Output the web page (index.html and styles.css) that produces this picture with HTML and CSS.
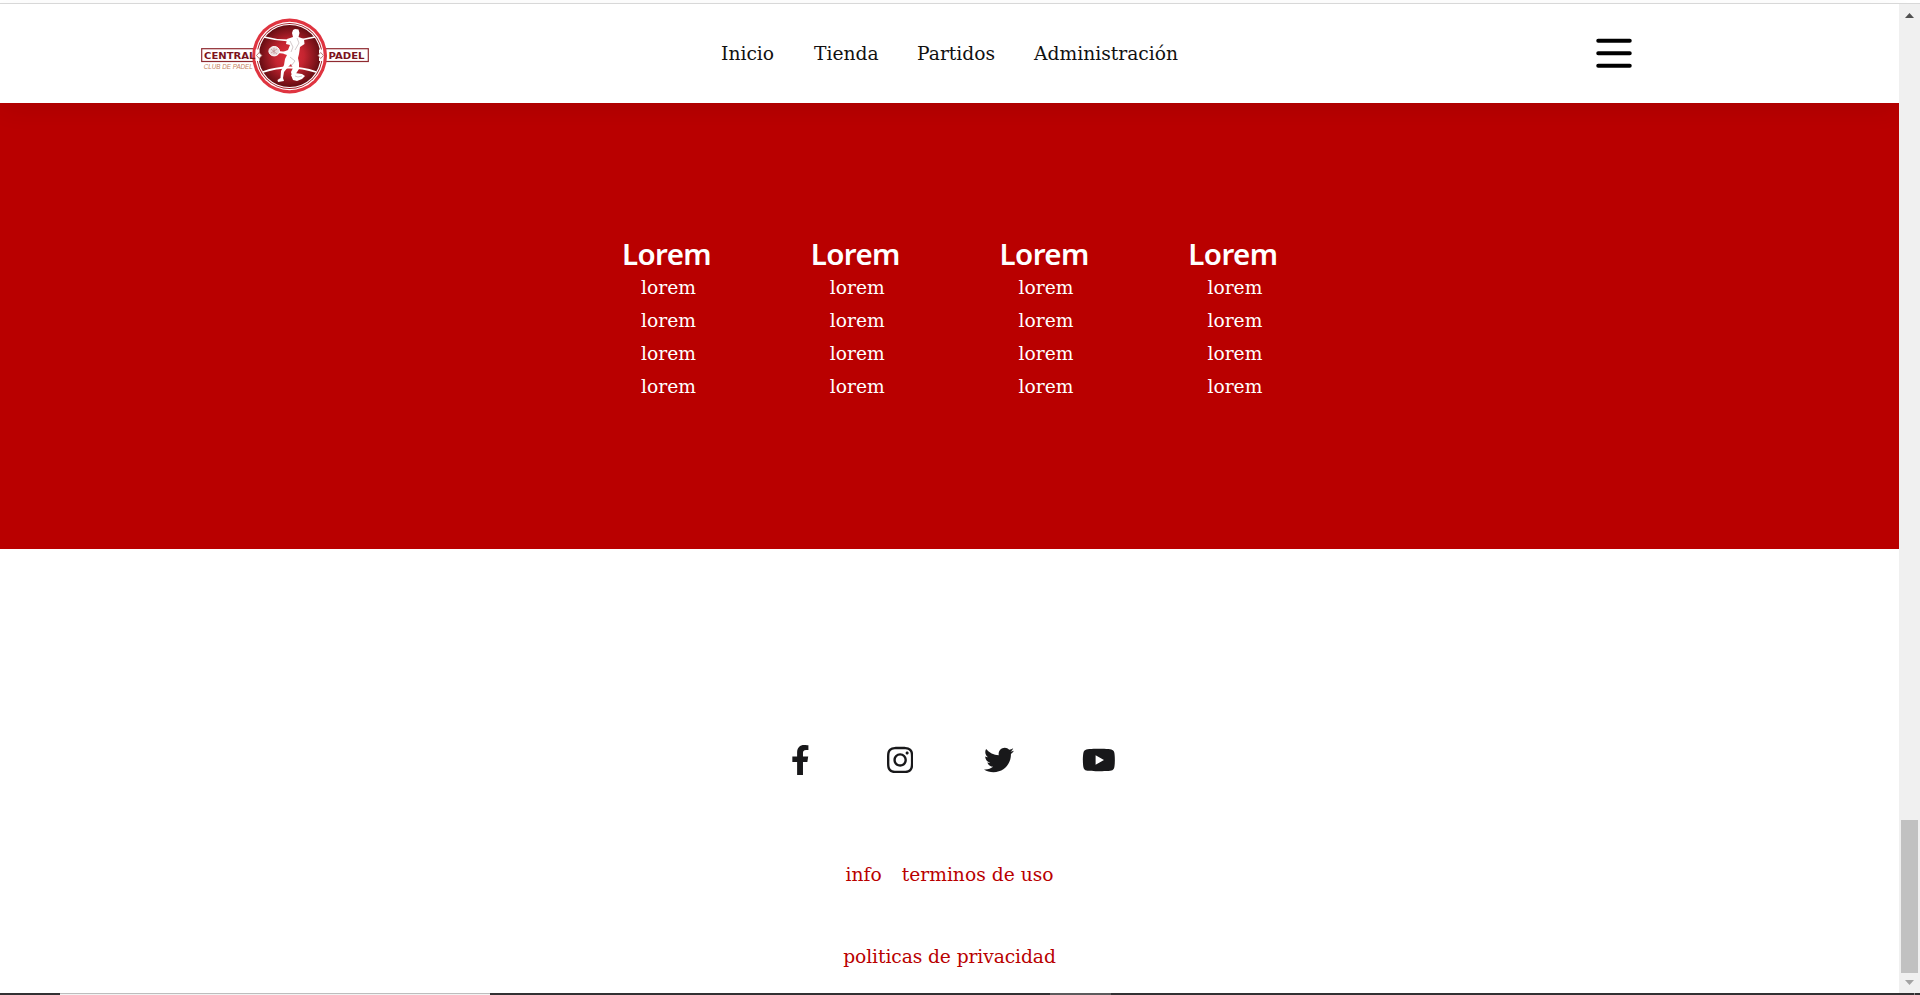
FILE: index.html
```html
<!DOCTYPE html>
<html lang="es">
<head>
<meta charset="utf-8">
<title>Central Padel</title>
<link rel="stylesheet" href="styles.css">
</head>
<body>
<div class="window">
  <div class="page">
    <header class="header">
      <svg class="logo" viewBox="0 0 168 76" role="img" aria-label="Central Padel">
        <defs>
          <radialGradient id="ball" cx=".5" cy=".5" r=".52">
            <stop offset="0" stop-color="#e0303c"/><stop offset=".45" stop-color="#c42430"/><stop offset="1" stop-color="#5e0b10"/>
          </radialGradient>
        </defs>
        <rect x=".7" y="30.7" width="60" height="12.8" fill="#fff" stroke="#8f2a30" stroke-width="1.2"/>
        <rect x="116" y="30.7" width="51.3" height="12.8" fill="#fff" stroke="#8f2a30" stroke-width="1.2"/>
        <circle cx="88.6" cy="38" r="37.4" fill="#df3440"/>
        <circle cx="88.6" cy="38" r="34.2" fill="#fff"/>
        <circle cx="88.6" cy="38" r="33" fill="#a51d27"/>
        <circle cx="88.6" cy="38" r="32.1" fill="#fff"/>
        <circle cx="88.6" cy="38" r="31" fill="url(#ball)"/>
        <path d="M63 19Q88 26 114 19M62 54Q88 45 115 54" fill="none" stroke="#fff" stroke-width="1.8"/>
        <path d="M54.500 31.500h4v11.400h-4zM118 31.500h4v11.400h-4z" fill="#fff"/>
        <path d="M55.5 37.5l2.7-3 2.7 3-2.7 3zM117 37.5l2.7-3 2.7 3-2.7 3z" fill="#fff" stroke="#a66560" stroke-width=".8"/>
        <path d="M92 12L94 11 97.500 11.500 98.500 15 97.500 19 103 21 103.500 26 99 29 98 36 97 40 98 45 98 51 94 57 91 58 90 54 92 50 90 46 87 49 83 54 82 60 83 63 77 64 76.500 62 79.500 60 80 53 83 47 84 41 86 37 83 36 82 34 87 32 89 27 85 26 86 21 92 19 91 15Z" fill="#fff"/>
        <path d="M90 57L94 55 101 56 104 58 101 61 96 63 92 62Z" fill="#fff"/>
        <path d="M89 23l3 6-2 5M96 20l2 5-4 7M89 39l5 4-4 5M94 58l3 1 4-1" fill="none" stroke="#b6a4a6" stroke-width=".6"/>
        <path d="M77 34l9 1" stroke="#fff" stroke-width="2"/>
        <ellipse cx="73.2" cy="33.2" rx="5.3" ry="4.7" fill="#e9dcdc" stroke="#fff"/>
        <path d="M70 31l6 5M70 35l6-4M73 30v6" stroke="#ba7c80" stroke-width=".6"/>
        <text class="logo-name" x="3" y="40.9" textLength="51.5" lengthAdjust="spacingAndGlyphs">CENTRAL</text>
        <text class="logo-name" x="127.5" y="40.9" textLength="36" lengthAdjust="spacingAndGlyphs">PADEL</text>
        <text class="logo-club" x="2.8" y="50.6" textLength="49" lengthAdjust="spacingAndGlyphs">CLUB DE PADEL</text>
      </svg>
      <nav class="nav">
        <a class="nav-inicio">Inicio</a><a class="nav-tienda">Tienda</a><a class="nav-partidos">Partidos</a><a class="nav-admin">Administración</a>
      </nav>
      <svg class="menu" viewBox="0 0 36 30"><path d="M2.2 2.8h31.6M2.2 15.3h31.6M2.2 27.8h31.6" stroke="#000" stroke-width="3.9" stroke-linecap="round"/></svg>
    </header>
    <section class="links">
      <div class="column"><h2>Lorem</h2><ul><li>lorem</li><li>lorem</li><li>lorem</li><li>lorem</li></ul></div>
      <div class="column"><h2>Lorem</h2><ul><li>lorem</li><li>lorem</li><li>lorem</li><li>lorem</li></ul></div>
      <div class="column"><h2>Lorem</h2><ul><li>lorem</li><li>lorem</li><li>lorem</li><li>lorem</li></ul></div>
      <div class="column"><h2>Lorem</h2><ul><li>lorem</li><li>lorem</li><li>lorem</li><li>lorem</li></ul></div>
    </section>
    <footer class="footer">
      <div class="social">
        <a><svg viewBox="0 0 320 512"><path d="M279.14 288l14.22-92.66h-88.91v-60.13c0-25.35 12.42-50.06 52.24-50.06h40.42V6.26S260.43 0 225.36 0c-73.22 0-121.08 44.38-121.08 124.72v70.62H22.89V288h81.39v224h100.17V288z"/></svg></a>
        <a><svg viewBox="0 0 448 512"><path d="M224.1 141c-63.6 0-114.9 51.3-114.9 114.9s51.3 114.9 114.9 114.9S339 319.5 339 255.9 287.7 141 224.1 141zm0 189.6c-41.1 0-74.7-33.5-74.7-74.7s33.5-74.7 74.7-74.7 74.7 33.5 74.7 74.7-33.6 74.7-74.7 74.7zm146.4-194.3c0 14.9-12 26.8-26.8 26.8-14.9 0-26.8-12-26.8-26.8s12-26.8 26.8-26.8 26.8 12 26.8 26.8zm76.1 27.2c-1.7-35.9-9.9-67.7-36.2-93.9-26.2-26.2-58-34.4-93.9-36.2-37-2.1-147.9-2.1-184.9 0-35.8 1.7-67.6 9.9-93.9 36.1s-34.4 58-36.2 93.9c-2.1 37-2.1 147.9 0 184.9 1.7 35.9 9.9 67.7 36.2 93.9s58 34.4 93.9 36.2c37 2.1 147.9 2.1 184.9 0 35.9-1.7 67.7-9.9 93.9-36.2 26.2-26.2 34.4-58 36.2-93.9 2.1-37 2.1-147.8 0-184.8zM398.8 388c-7.8 19.6-22.9 34.7-42.6 42.6-29.5 11.7-99.5 9-132.1 9s-102.7 2.6-132.1-9c-19.6-7.8-34.7-22.9-42.6-42.6-11.7-29.5-9-99.5-9-132.1s-2.6-102.7 9-132.1c7.8-19.6 22.9-34.7 42.6-42.6 29.5-11.7 99.5-9 132.1-9s102.7-2.6 132.1 9c19.6 7.8 34.7 22.9 42.6 42.6 11.7 29.5 9 99.5 9 132.1s2.7 102.7-9 132.1z"/></svg></a>
        <a><svg viewBox="0 0 512 512"><path d="M459.37 151.716c.325 4.548.325 9.097.325 13.645 0 138.72-105.583 298.558-298.558 298.558-59.452 0-114.68-17.219-161.137-47.106 8.447.974 16.568 1.299 25.34 1.299 49.055 0 94.213-16.568 130.274-44.832-46.132-.975-84.792-31.188-98.112-72.772 6.498.974 12.995 1.624 19.818 1.624 9.421 0 18.843-1.3 27.614-3.573-48.081-9.747-84.143-51.98-84.143-102.985v-1.299c13.969 7.797 30.214 12.67 47.431 13.319-28.264-18.843-46.781-51.005-46.781-87.391 0-19.492 5.197-37.36 14.294-52.954 51.655 63.675 129.3 105.258 216.365 109.807-1.624-7.797-2.599-15.918-2.599-24.04 0-57.828 46.782-104.934 104.934-104.934 30.213 0 57.502 12.67 76.67 33.137 23.715-4.548 46.456-13.32 66.599-25.34-7.798 24.366-24.366 44.833-46.132 57.827 21.117-2.273 41.584-8.122 60.426-16.243-14.292 20.791-32.161 39.308-52.628 54.253z"/></svg></a>
        <a><svg viewBox="0 0 576 512"><path d="M549.655 124.083c-6.281-23.65-24.787-42.276-48.284-48.597C458.781 64 288 64 288 64S117.22 64 74.629 75.486c-23.497 6.322-42.003 24.947-48.284 48.597-11.412 42.867-11.412 132.305-11.412 132.305s0 89.438 11.412 132.305c6.281 23.65 24.787 41.5 48.284 47.821C117.22 448 288 448 288 448s170.78 0 213.371-11.486c23.497-6.321 42.003-24.171 48.284-47.821 11.412-42.867 11.412-132.305 11.412-132.305s0-89.438-11.412-132.305zm-317.51 213.508V175.185l142.739 81.205-142.739 81.201z"/></svg></a>
      </div>
      <div class="legal"><a>info</a><a>terminos de uso</a></div>
      <div class="legal"><a class="privacy">politicas de privacidad</a></div>
    </footer>
  </div>
  <aside class="scrollbar">
    <svg class="arrow" viewBox="0 0 9 5"><path d="M0 5l4.5-5L9 5z" fill="#505050"/></svg>
    <div class="thumb"></div>
    <svg class="arrow" viewBox="0 0 9 5"><path d="M0 0h9L4.5 5z" fill="#a3a3a3"/></svg>
  </aside>
</div>
<div class="taskbar"><i class="field"></i><i class="task"></i><i class="edge"></i></div>
</body>
</html>
```

FILE: styles.css
```css
* { box-sizing: border-box; }
body {
  margin: 0;
  height: 995px;
  overflow: hidden;
  display: flex;
  flex-direction: column;
  background: #fff;
  font-family: "DejaVu Serif", serif;
  font-size: 18.7px;
  color: #111;
}
.window {
  height: 993px;
  padding-top: 3px;
  display: flex;
}
.window::before {
  content: "";
  position: absolute;
  top: 3px;
  left: 0;
  width: 100%;
  height: 1px;
  background: #d8d8d8;
  z-index: 3;
}
.page { width: 1899px; }

.header {
  position: relative;
  z-index: 1;
  height: 100px;
  display: grid;
  grid-template-columns: 520px 1fr 36px;
  align-items: center;
  padding: 0 267px 0 201px;
  background: #fff;
  box-shadow: 0 8px 24px -2px rgba(0, 0, 0, .08);
}
.logo { width: 168px; height: 76px; margin-top: 6px; }
.logo-name { font: bold 9.3px "DejaVu Sans", sans-serif; fill: #7c141c; }
.logo-club { font: italic 6.3px "Liberation Sans", sans-serif; fill: #c58160; }
.nav { display: flex; gap: 40px; line-height: 26px; padding-top: 2px; white-space: nowrap; }
.nav a { display: block; }
.nav-inicio { width: 53px; }
.nav-tienda { width: 63px; }
.nav-partidos { width: 77px; }
.menu { width: 36px; height: 30px; }

.links {
  height: 446px;
  padding: 133px 0 0 617px;
  background: #b90000;
  color: #fff;
  display: flex;
}
.column { width: 188.8px; }
.column h2 {
  margin: 0;
  width: 99px;
  font: 600 29.5px/35px "Noto Sans", sans-serif;
  letter-spacing: -.6px;
  text-align: center;
}
.column ul {
  list-style: none;
  margin: 0;
  padding: 0;
  width: 103px;
  text-align: center;
  line-height: 33px;
}

.footer {
  padding-top: 191px;
  color: #b90000;
}
.social {
  display: grid;
  grid-template-columns: repeat(4, 99.7px);
  justify-content: center;
  height: 40px;
}
.social a { display: flex; justify-content: center; align-items: center; }
.social svg { height: 30px; fill: #18181a; }
.legal {
  display: flex;
  justify-content: center;
  gap: 20px;
  height: 82px;
  line-height: 26px;
  white-space: nowrap;
}
.social + .legal { margin-top: 82px; }
.privacy { letter-spacing: -.1px; }

.scrollbar {
  position: relative;
  z-index: 2;
  width: 21px;
  padding: 10px 0 8px;
  background: #f0f0f0;
  display: flex;
  flex-direction: column;
  align-items: center;
}
.arrow { width: 9px; height: 5px; }
.thumb { width: 17px; height: 153px; margin: auto 0 7px; background: #c1c1c1; }

.taskbar {
  height: 2px;
  background: #333133;
  display: flex;
}
.field { width: 430px; margin-left: 60px; border-top: 1px solid #bdbdbd; background: #f2f2f2; }
.task { width: 61px; margin-left: 560px; background: #5d5b5d; }
.edge { width: 1px; margin-left: 803px; background: #888; }
```
